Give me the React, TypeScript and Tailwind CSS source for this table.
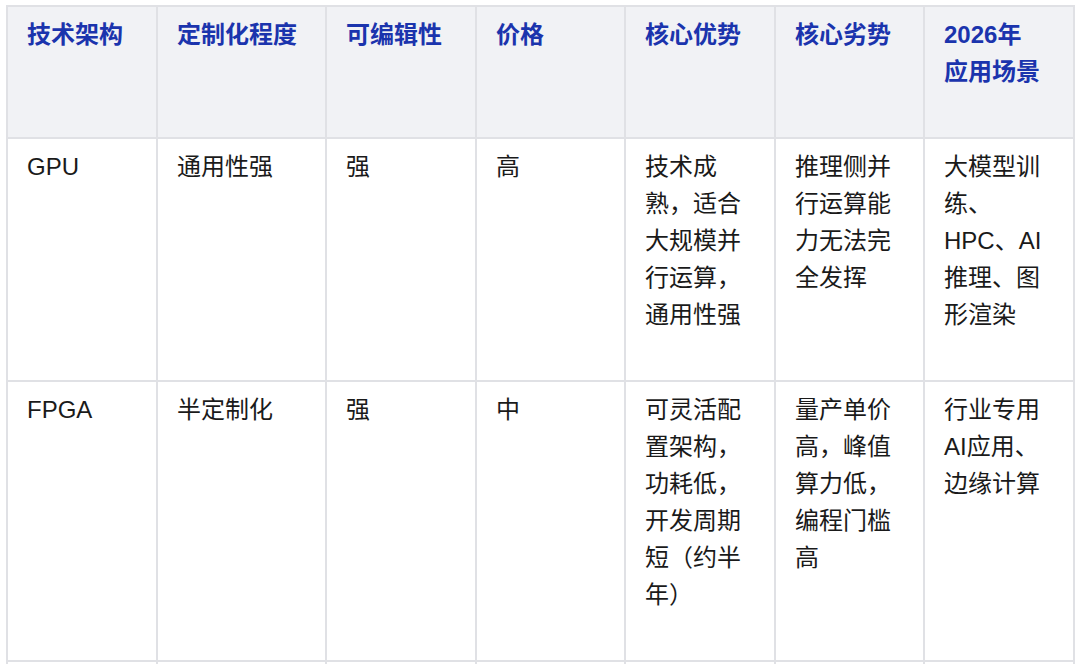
const headers = ['技术架构', '定制化程度', '可编辑性', '价格', '核心优势', '核心劣势', '2026年\n应用场景']

const rows: string[][] = [
  [
    'GPU',
    '通用性强',
    '强',
    '高',
    '技术成\n熟，适合\n大规模并\n行运算，\n通用性强',
    '推理侧并\n行运算能\n力无法完\n全发挥',
    '大模型训\n练、\nHPC、AI\n推理、图\n形渲染',
  ],
  [
    'FPGA',
    '半定制化',
    '强',
    '中',
    '可灵活配\n置架构，\n功耗低，\n开发周期\n短（约半\n年）',
    '量产单价\n高，峰值\n算力低，\n编程门槛\n高',
    '行业专用\nAI应用、\n边缘计算',
  ],
]

const widths = ['w-[150px]', 'w-[169px]', 'w-[150px]', 'w-[149px]', 'w-[150px]', 'w-[149px]', 'w-[150px]']

export default function App() {
  return (
    <div className="h-[664px] overflow-hidden bg-white pl-[6px] pt-[5px] font-['Liberation_Sans','Noto_Sans_CJK_SC',sans-serif] text-[24px] leading-[37px]">
      <table className="w-[1069px] table-fixed border-collapse">
        <colgroup>
          {widths.map((w, i) => (
            <col key={i} className={w} />
          ))}
        </colgroup>
        <thead>
          <tr className="bg-[#f1f2f5]">
            {headers.map((h) => (
              <th
                key={h}
                className="border-2 border-[#e0e1e5] pl-[19px] pr-2 pt-[9px] pb-[47px] text-left align-top font-bold whitespace-pre-line text-[#1b34ad]"
              >
                {h}
              </th>
            ))}
          </tr>
        </thead>
        <tbody>
          {rows.map((r) => (
            <tr key={r[0]}>
              {r.map((c, i) => (
                <td
                  key={i}
                  className="border-2 border-[#e0e1e5] pl-[19px] pr-2 pt-[9px] pb-[47px] align-top whitespace-pre-line text-[#1a1a1a]"
                >
                  {c}
                </td>
              ))}
            </tr>
          ))}
          {/* next row continues below the fold */}
          <tr className="h-[60px]">
            {widths.map((_, i) => (
              <td key={i} className="border-2 border-[#e0e1e5]" />
            ))}
          </tr>
        </tbody>
      </table>
    </div>
  )
}
